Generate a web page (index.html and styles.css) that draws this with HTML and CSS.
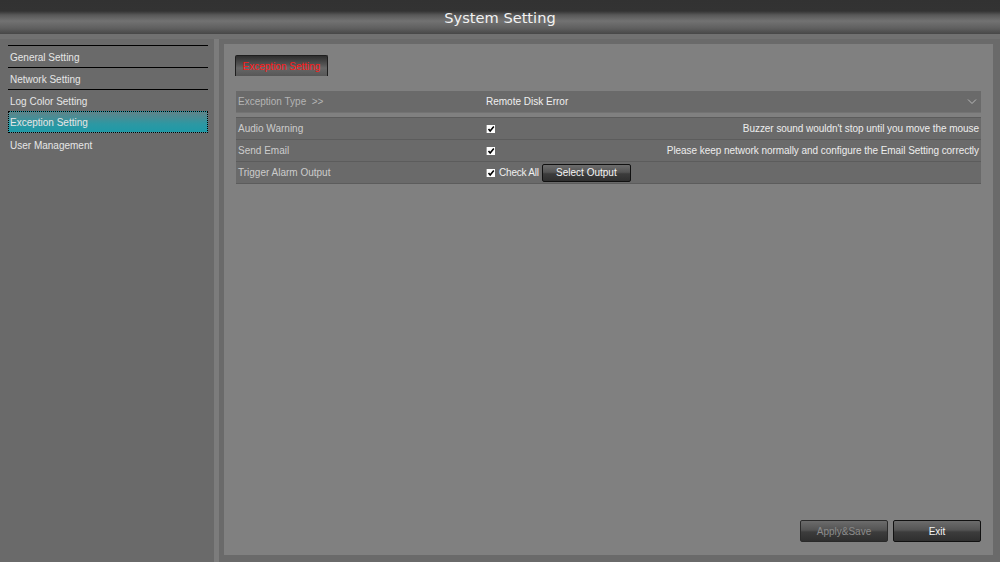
FILE: index.html
```html
<!DOCTYPE html>
<html>
<head>
  <title>System Setting</title>
  <link rel="stylesheet" href="styles.css">
</head>
<body>
  <div class="titlebar">System Setting</div>

  <div class="main">
    <div class="menu">
      <div class="item line">General Setting</div>
      <div class="item line">Network Setting</div>
      <div class="item line">Log Color Setting</div>
      <div class="item active">Exception Setting</div>
      <div class="item">User Management</div>
    </div>
    <div class="divider"></div>

    <div class="content">
      <div class="panel">
        <div class="tabs">
          <div class="tab">Exception Setting</div>
        </div>

        <div class="row type">
          <span class="label">Exception Type &nbsp;&gt;&gt;</span>
          <span class="value">Remote Disk Error</span>
          <span class="arrow">
            <svg width="10" height="7" viewBox="0 0 10 7"><path d="M1 1.5 L5 5.5 L9 1.5" fill="none" stroke="#b8b8b8" stroke-width="1"/></svg>
          </span>
        </div>

        <div class="rows">
          <div class="row">
            <span class="label">Audio Warning</span>
            <span class="value"><span class="check"><svg width="8" height="8" viewBox="0 0 8 8"><path d="M1.5 4 L3.2 6 L6.8 1.6" fill="none" stroke="#000" stroke-width="1.6"/></svg></span></span>
            <span class="hint">Buzzer sound wouldn't stop until you move the mouse</span>
          </div>
          <div class="row">
            <span class="label">Send Email</span>
            <span class="value"><span class="check"><svg width="8" height="8" viewBox="0 0 8 8"><path d="M1.5 4 L3.2 6 L6.8 1.6" fill="none" stroke="#000" stroke-width="1.6"/></svg></span></span>
            <span class="hint">Please keep network normally and configure the Email Setting correctly</span>
          </div>
          <div class="row">
            <span class="label">Trigger Alarm Output</span>
            <span class="value">
              <span class="check"><svg width="8" height="8" viewBox="0 0 8 8"><path d="M1.5 4 L3.2 6 L6.8 1.6" fill="none" stroke="#000" stroke-width="1.6"/></svg></span>
              <span class="checktext">Check All</span>
              <button class="btn small">Select Output</button>
            </span>
          </div>
        </div>

        <div class="footer">
          <button class="btn wide disabled">Apply&amp;Save</button>
          <button class="btn wide">Exit</button>
        </div>
      </div>
    </div>
  </div>
</body>
</html>
```

FILE: styles.css
```css
body {
  margin: 0;
  background: #6a6a6a;
  font-family: "Liberation Sans", Arial, sans-serif;
  font-size: 10px;
  color: #e6e6e6;
  height: 562px;
  overflow: hidden;
}

.titlebar {
  height: 34px;
  line-height: 36px;
  text-align: center;
  font-family: "DejaVu Sans", sans-serif;
  font-size: 14.6px;
  color: #f2f2f2;
  background: linear-gradient(#323232 0, #333333 11px, #585858 15px, #727272 21px, #606060 28px, #474747 34px);
  border-bottom: 5px solid #717171;
}

.main {
  display: flex;
  height: 523px;
}

.menu {
  width: 200px;
  padding: 6px 6px 0 8px;
}

.item {
  height: 21px;
  line-height: 23px;
  padding-left: 2px;
  border-top: 1px solid transparent;
}

.item.line {
  border-top-color: #000;
}

.item.active {
  border: 1px dotted #000;
  height: 20px;
  line-height: 21px;
  padding-left: 1px;
  background: linear-gradient(#5f8489, #2c98a3 60%, #1f9aa7);
}

.divider {
  width: 5px;
  background: #7c7c7c;
}

.content {
  flex: 1;
  padding: 5px 7px 7px 5px;
  display: flex;
}

.panel {
  flex: 1;
  background: #808080;
  padding: 11px 12px 13px 12px;
  display: flex;
  flex-direction: column;
}

.tabs {
  display: flex;
  margin-left: -1px;
  margin-bottom: 15px;
}

.tab {
  width: 91px;
  height: 20px;
  line-height: 21px;
  text-align: center;
  color: #ff1a1a;
  border: 1px solid #1e1e1e;
  border-bottom: none;
  border-radius: 2px 2px 0 0;
  background: linear-gradient(#2e2e2e, #555555 45%, #666666 60%, #575757);
}

.row {
  display: flex;
  align-items: center;
  height: 21px;
  background: #6a6a6a;
  border-bottom: 1px solid #5c5c5c;
  padding: 0 2px;
}

.row.type {
  border-bottom: 1px solid #737373;
  margin-bottom: 4px;
}

.row.type .label {
  color: #b4b4b4;
}

.rows {
  border-top: 1px solid #5c5c5c;
}

.label {
  width: 248px;
  color: #cccccc;
}

.value {
  display: flex;
  align-items: center;
  color: #f0f0f0;
}

.arrow {
  margin-left: auto;
  display: flex;
  padding-right: 2px;
}

.hint {
  margin-left: auto;
  color: #ededed;
  letter-spacing: -0.05px;
}

.check {
  width: 8px;
  height: 8px;
  background: #fff;
  border-left: 1px solid #a0a0a0;
  display: flex;
}

.checktext {
  margin-left: 4px;
  color: #f0f0f0;
  letter-spacing: -0.2px;
}

.btn {
  font-family: "Liberation Sans", Arial, sans-serif;
  font-size: 10px;
  color: #f4f4f4;
  border: 1px solid #111;
  border-radius: 2px;
  background: linear-gradient(#6c6c6c, #545454 45%, #3c3c3c 55%, #2f2f2f);
  padding: 0;
}

.btn.small {
  width: 89px;
  height: 18px;
  margin-left: 3px;
}

.footer {
  margin-top: auto;
  display: flex;
  justify-content: flex-end;
  gap: 5px;
}

.btn.wide {
  width: 88px;
  height: 22px;
}

.btn.disabled {
  color: #8c8c8c;
  border-color: #2a2a2a;
}
```
